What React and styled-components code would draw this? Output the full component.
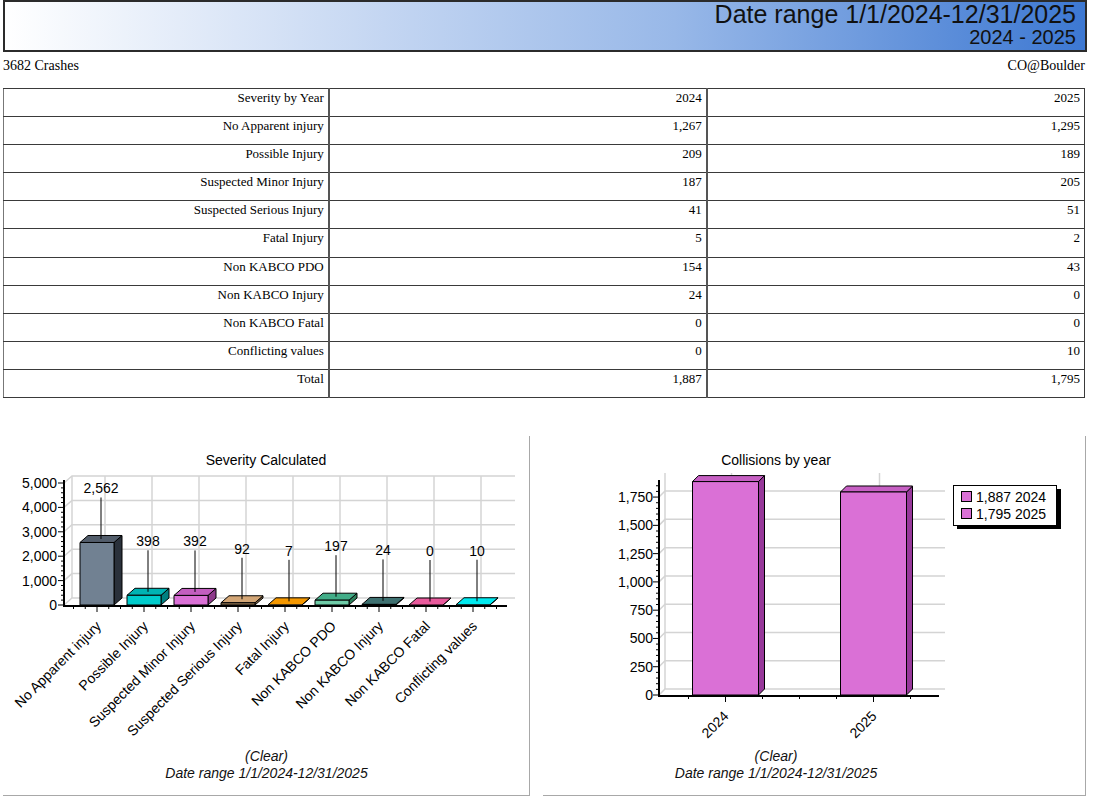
import React from "react";
import styled, { createGlobalStyle } from "styled-components";

const GlobalStyle = createGlobalStyle`
    html, body {
        margin: 0;
        padding: 0;
        background: #ffffff;
    }
    body {
        font-family: "Liberation Serif", "Times New Roman", serif;
        color: #000;
    }
`;

const Page = styled.div`
    width: 1084px;
    padding-left: 3px;
`;

const Banner = styled.div`
    box-sizing: border-box;
    height: 52px;
    border: 2px solid #2b2b2b;
    background: linear-gradient(to right, #ffffff 0%, #c4d6f2 35%, #98b8e8 62%, #3d78d2 100%);
    padding: 0 9px 0 0;
    text-align: right;
    font-family: "Liberation Sans", Arial, sans-serif;
    color: #111;
`;

const BannerTitle = styled.div`
    font-size: 25px;
    line-height: 25px;
`;

const BannerSub = styled.div`
    font-size: 20px;
    line-height: 21px;
`;

const InfoRow = styled.div`
    display: flex;
    justify-content: space-between;
    margin-top: 6px;
    font-size: 14px;
    line-height: 16px;
    padding-right: 2px;
`;

const Table = styled.table`
    width: 1082px;
    margin-top: 14px;
    border-collapse: collapse;
    border: 1px solid #6a6a6a;
    font-size: 13px;
`;

const Row = styled.tr`
    height: 28.1px;
`;

const Cell = styled.td`
    border: 1px solid #3a3a3a;
    border-left: ${(p) => (p.$first ? "1px solid #777" : "2px solid #555")};
    text-align: right;
    vertical-align: top;
    padding: 1px 4px 0 4px;
    line-height: 15px;
    width: ${(p) => p.$w}px;
`;

const ChartsRow = styled.div`
    display: flex;
    gap: 13px;
    margin-top: 38px;
`;

const Panel = styled.div`
    box-sizing: border-box;
    width: ${(p) => p.$w}px;
    height: 360px;
    border-right: 1px solid #a8a8a8;
    border-bottom: 1px solid #a8a8a8;
    display: flex;
    flex-direction: column;
`;

const Chart = styled.svg`
    display: block;
    font-family: "Liberation Sans", Arial, sans-serif;
    font-size: 14px;
`;

const Caption = styled.div`
    font-family: "Liberation Sans", Arial, sans-serif;
    font-style: italic;
    font-size: 14px;
    line-height: 17px;
    text-align: center;
    padding-left: ${(p) => p.$pl || 0}px;
    padding-right: ${(p) => p.$pr || 0}px;
    color: #111;
`;

const rows = [
    ["Severity by Year", "2024", "2025"],
    ["No Apparent injury", "1,267", "1,295"],
    ["Possible Injury", "209", "189"],
    ["Suspected Minor Injury", "187", "205"],
    ["Suspected Serious Injury", "41", "51"],
    ["Fatal Injury", "5", "2"],
    ["Non KABCO PDO", "154", "43"],
    ["Non KABCO Injury", "24", "0"],
    ["Non KABCO Fatal", "0", "0"],
    ["Conflicting values", "0", "10"],
    ["Total", "1,887", "1,795"],
];

const severity = [
    { name: "No Apparent injury", value: 2562, c: ["#718192", "#525d6b", "#2a313b"] },
    { name: "Possible Injury", value: 398, c: ["#00cccc", "#00b3b3", "#007f7f"] },
    { name: "Suspected Minor Injury", value: 392, c: ["#da70d6", "#c35ec0", "#8e3a8b"] },
    { name: "Suspected Serious Injury", value: 92, c: ["#8f7350", "#d3a676", "#7e6140"] },
    { name: "Fatal Injury", value: 7, c: ["#e08800", "#f59800", "#a86400"] },
    { name: "Non KABCO PDO", value: 197, c: ["#6fcca8", "#42ad88", "#2e7f5a"] },
    { name: "Non KABCO Injury", value: 24, c: ["#2f5050", "#3e7070", "#1e3838"] },
    { name: "Non KABCO Fatal", value: 0, c: ["#e0508e", "#e95a9c", "#a83466"] },
    { name: "Conflicting values", value: 10, c: ["#00d4dc", "#00eaf0", "#009aa0"] },
];

const fmt = (n) => n.toLocaleString("en-US");

// one 3D box: front, top face, right side
const Bar3D = ({ x, bottom, h, bw, dx, dy, c }) => {
    const top = bottom - h;
    return (
        <g stroke="#000" strokeWidth="1" strokeLinejoin="round">
            <polygon
                points={`${x + bw},${top} ${x + bw + dx},${top - dy} ${x + bw + dx},${bottom - dy} ${x + bw},${bottom}`}
                fill={c[2]}
            />
            <polygon points={`${x},${top} ${x + dx},${top - dy} ${x + bw + dx},${top - dy} ${x + bw},${top}`} fill={c[1]} />
            {h > 0.5 && <rect x={x} y={top} width={bw} height={h} fill={c[0]} />}
        </g>
    );
};

const SeverityChart = () => {
    const floor = 606;
    const k = 0.0244;
    const ax = 64;
    const dx = 8;
    const dy = 7;
    const bw = 34;
    const W = 47;
    const cx = (i) => 97 + W * i;
    const yOf = (v) => floor - v * k;
    const levels = [0, 1000, 2000, 3000, 4000, 5000];
    const minor = [];
    for (let v = 0; v <= 5000; v += 200) minor.push(v);
    const xticks = [];
    for (let t = 73.5; t <= 497; t += W / 4) xticks.push(t);

    return (
        <Chart width="527" height="312" viewBox="3 437 527 312">
            <text x="266" y="466" textAnchor="middle">
                Severity Calculated
            </text>
            <g stroke="#d4d4d4" strokeWidth="1.5" fill="none">
                <line x1={ax + dx} y1={yOf(5000) - dy} x2={ax + dx} y2={floor - dy} />
                {levels.map((v) => (
                    <polyline
                        key={v}
                        points={`${ax},${yOf(v)} ${ax + dx},${yOf(v) - dy} 515,${yOf(v) - dy}`}
                    />
                ))}
                {severity.map((s, i) => (
                    <line key={s.name} x1={cx(i) + dx} y1={yOf(5000) - dy} x2={cx(i) + dx} y2={floor - dy} />
                ))}
            </g>
            <g stroke="#000" strokeWidth="1">
                {minor.map((v) => (
                    <line key={v} x1={v % 1000 === 0 ? ax - 6 : ax - 3} y1={yOf(v)} x2={ax} y2={yOf(v)} />
                ))}
                {xticks.map((t, i) => (
                    <line key={i} x1={t} y1={floor + 1} x2={t} y2={i % 4 === 2 ? floor + 7 : floor + 4} />
                ))}
            </g>
            <line x1={ax} y1="481" x2={ax} y2={floor + 2} stroke="#000" strokeWidth="2" />
            <line x1={ax - 1} y1={floor + 1} x2="507" y2={floor + 1} stroke="#000" strokeWidth="2" />
            {levels.map((v) => (
                <text key={v} x="57" y={yOf(v) + 5} textAnchor="end">
                    {fmt(v)}
                </text>
            ))}
            {severity.map((s, i) => {
                const h = s.value * k;
                const x = cx(i) - bw / 2;
                const topBack = floor - h - dy;
                const lx = cx(i) + dx / 2;
                const ex = cx(i) + 5;
                const ey = floor + 22;
                return (
                    <g key={s.name}>
                        <Bar3D x={x} bottom={floor} h={h} bw={bw} dx={dx} dy={dy} c={s.c} />
                        <line x1={lx} y1={topBack - 38} x2={lx} y2={floor - h - dy / 2} stroke="#000" strokeWidth="1" />
                        <text x={lx} y={topBack - 42} textAnchor="middle">
                            {fmt(s.value)}
                        </text>
                        <text x={ex} y={ey} textAnchor="end" transform={`rotate(-45 ${ex} ${ey})`}>
                            {s.name}
                        </text>
                    </g>
                );
            })}
        </Chart>
    );
};

const collisions = [
    { year: "2024", value: 1887 },
    { year: "2025", value: 1795 },
];
const orchid = ["#da70d6", "#c65fc3", "#97389a"];

const CollisionChart = () => {
    const floor = 696;
    const k = 0.1131;
    const ax = 659;
    const dx = 6;
    const dy = 6;
    const bw = 66;
    const centers = [725.5, 873.5];
    const yOf = (v) => floor - v * k;
    const levels = [0, 250, 500, 750, 1000, 1250, 1500, 1750];
    const minor = [];
    for (let v = 0; v <= 1850; v += 50) minor.push(v);
    const xticks = [0, 1, 2, 3, 4, 5, 6].map((j) => 688.5 + 37 * j);

    return (
        <Chart width="543" height="312" viewBox="543 437 543 312">
            <text x="776" y="466" textAnchor="middle">
                Collisions by year
            </text>
            <g stroke="#d4d4d4" strokeWidth="1.5" fill="none">
                <line x1={ax + dx} y1="474" x2={ax + dx} y2={floor - dy} />
                {levels.map((v) => (
                    <polyline
                        key={v}
                        points={`${ax},${yOf(v)} ${ax + dx},${yOf(v) - dy} 945,${yOf(v) - dy}`}
                    />
                ))}
                {centers.map((c) => (
                    <line key={c} x1={c + dx} y1="474" x2={c + dx} y2={floor - dy} />
                ))}
            </g>
            <g stroke="#000" strokeWidth="1">
                {minor.map((v) => (
                    <line key={v} x1={v % 250 === 0 ? ax - 6 : ax - 3} y1={yOf(v)} x2={ax} y2={yOf(v)} />
                ))}
                {xticks.map((t, i) => (
                    <line key={i} x1={t} y1={floor + 1} x2={t} y2={i === 1 || i === 5 ? floor + 7 : floor + 4} />
                ))}
            </g>
            <line x1={ax} y1="481" x2={ax} y2={floor + 2} stroke="#000" strokeWidth="2" />
            <line x1={ax - 1} y1={floor + 1} x2="939" y2={floor + 1} stroke="#000" strokeWidth="2" />
            {levels.map((v) => (
                <text key={v} x="653" y={yOf(v) + 5} textAnchor="end">
                    {fmt(v)}
                </text>
            ))}
            {collisions.map((c, i) => (
                <g key={c.year}>
                    <Bar3D x={centers[i] - bw / 2} bottom={floor} h={c.value * k} bw={bw} dx={dx} dy={dy} c={orchid} />
                    <text
                        x={centers[i] + 4}
                        y={floor + 22}
                        textAnchor="end"
                        transform={`rotate(-45 ${centers[i] + 4} ${floor + 22})`}
                    >
                        {c.year}
                    </text>
                </g>
            ))}
            <rect x="957" y="490" width="104" height="40" fill="#000" />
            <rect x="953.5" y="486.5" width="103" height="40" fill="#fff" stroke="#000" />
            {collisions.map((c, i) => (
                <g key={c.year}>
                    <rect x="961.5" y={492.5 + i * 17} width="10" height="10" fill="#da70d6" stroke="#000" />
                    <text x="976" y={503 + i * 17}>
                        {fmt(c.value)} {c.year}
                    </text>
                </g>
            ))}
        </Chart>
    );
};

const App = () => {
    return (
        <Page>
            <GlobalStyle />
            <Banner>
                <BannerTitle>Date range 1/1/2024-12/31/2025</BannerTitle>
                <BannerSub>2024 - 2025</BannerSub>
            </Banner>
            <InfoRow>
                <span>3682 Crashes</span>
                <span>CO@Boulder</span>
            </InfoRow>
            <Table>
                <tbody>
                    {rows.map((r) => (
                        <Row key={r[0]}>
                            <Cell $first $w={324}>
                                {r[0]}
                            </Cell>
                            <Cell $w={379}>{r[1]}</Cell>
                            <Cell $w={379}>{r[2]}</Cell>
                        </Row>
                    ))}
                </tbody>
            </Table>
            <ChartsRow>
                <Panel $w={527}>
                    <SeverityChart />
                    <Caption $pl={1}>
                        (Clear)
                        <br />
                        Date range 1/1/2024-12/31/2025
                    </Caption>
                </Panel>
                <Panel $w={543}>
                    <CollisionChart />
                    <Caption $pr={76}>
                        (Clear)
                        <br />
                        Date range 1/1/2024-12/31/2025
                    </Caption>
                </Panel>
            </ChartsRow>
        </Page>
    );
};

export default App;
